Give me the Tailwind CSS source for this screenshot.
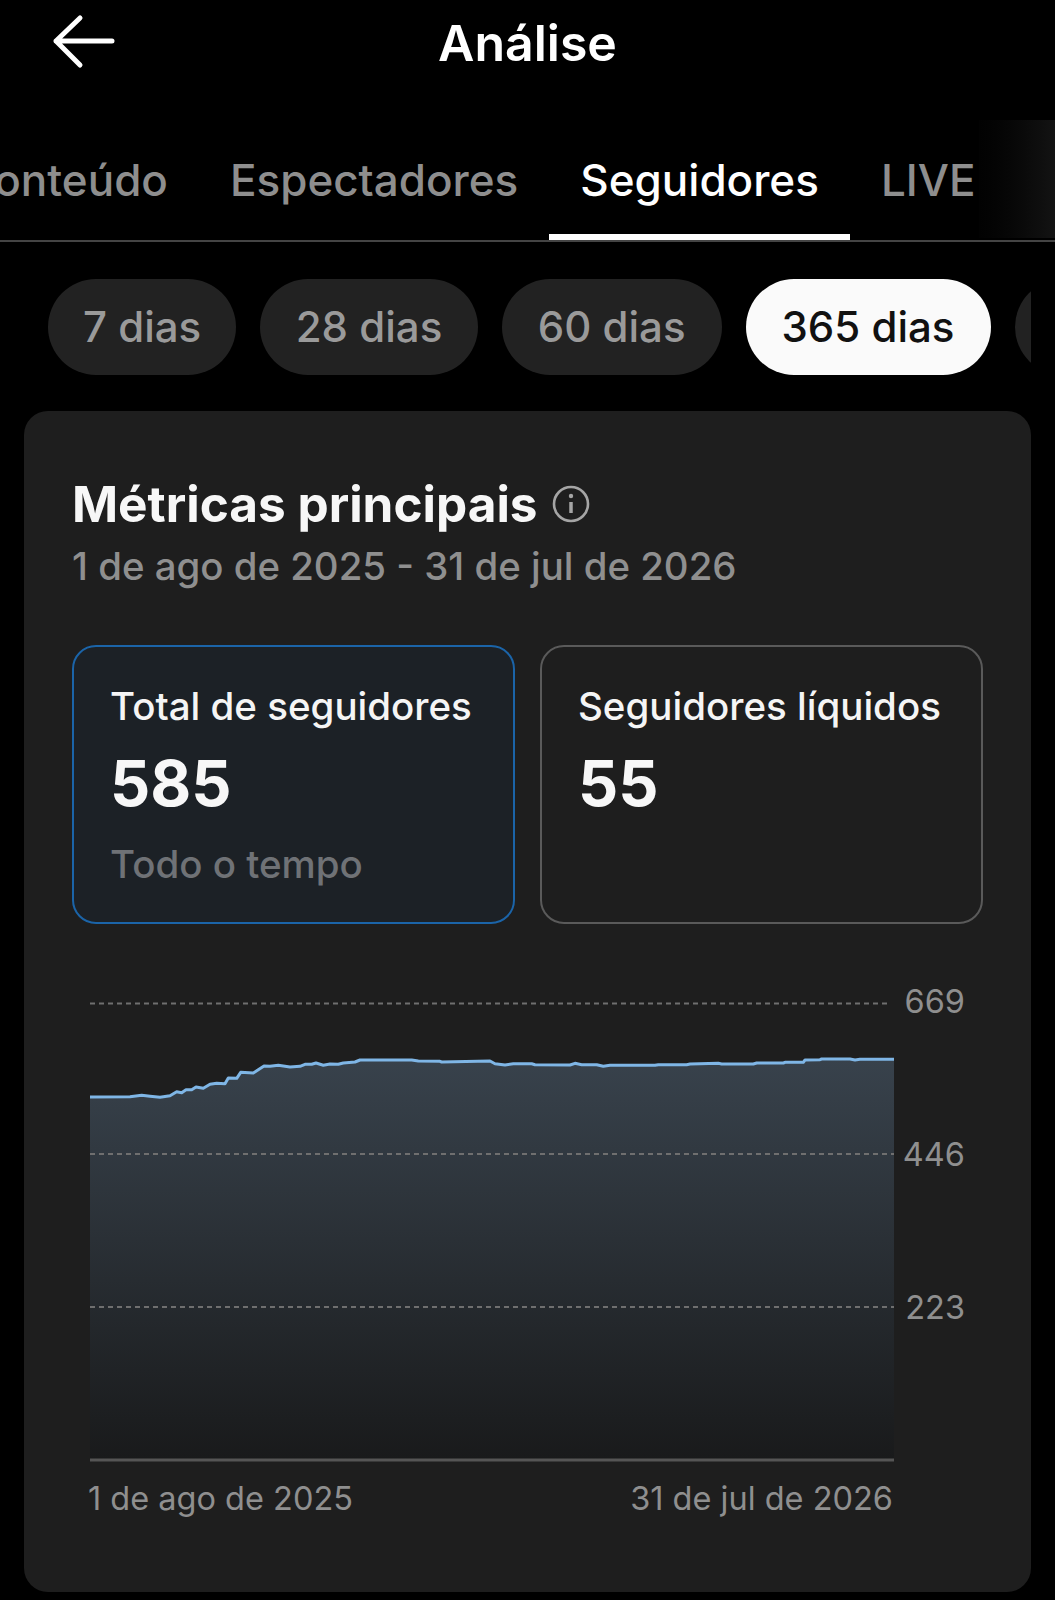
<!DOCTYPE html>
<html lang="pt">
<head>
  <meta charset="UTF-8" />
  <title>Análise</title>
  <script src="https://cdn.jsdelivr.net/npm/@tailwindcss/browser@4"></script>
</head>
<body class="bg-black text-white w-[1055px] h-[1600px] overflow-hidden font-['Inter',sans-serif]">

  <!-- Header -->
  <header class="relative h-[120px] flex justify-center pt-[12px]">
    <svg class="absolute left-[52px] top-[14px] w-[64px] h-[56px]" viewBox="0 0 64 56" fill="none" stroke="#fff" stroke-width="5" stroke-linecap="round" stroke-linejoin="round">
      <path d="M28 4 L4 27 L28 51 M4 27 H60" />
    </svg>
    <h1 class="text-[50px] leading-[62px] font-semibold">Análise</h1>
  </header>

  <!-- Tabs -->
  <nav class="relative h-[122px] border-b-2 border-[#444444] overflow-hidden">
    <div class="flex ml-[-69px] pt-[30px] text-[44px] leading-[60px] font-medium text-[#8e8e8e] whitespace-nowrap">
      <div class="shrink-0 px-[31px] h-[90px]">Conteúdo</div>
      <div class="shrink-0 px-[31px] h-[90px]">Espectadores</div>
      <div class="shrink-0 px-[31px] h-[90px] text-white border-b-[6px] border-white">Seguidores</div>
      <div class="shrink-0 px-[31px] h-[90px]">LIVE</div>
    </div>
    <div class="absolute right-0 top-0 h-[118px] w-[76px] bg-gradient-to-r from-[#020202] to-[#131313]"></div>
  </nav>

  <!-- Period pills -->
  <div class="flex gap-[24px] ml-[48px] mr-[24px] mt-[37px] overflow-hidden text-[42px] leading-[96px] font-medium whitespace-nowrap">
    <div class="shrink-0 h-[96px] px-[35px] rounded-[48px] bg-[#222222] text-[#9a9a9a]">7 dias</div>
    <div class="shrink-0 h-[96px] px-[35.5px] rounded-[48px] bg-[#222222] text-[#9a9a9a]">28 dias</div>
    <div class="shrink-0 h-[96px] px-[36px] rounded-[48px] bg-[#222222] text-[#9a9a9a]">60 dias</div>
    <div class="shrink-0 h-[96px] px-[36px] rounded-[48px] bg-[#fafafa] text-[#111111]">365 dias</div>
    <div class="shrink-0 h-[96px] w-[100px] rounded-[48px] bg-[#222222]"></div>
  </div>

  <!-- Main card -->
  <section class="mt-[36px] mx-[24px] h-[1181px] rounded-[24px] bg-[#1e1e1e] pt-[60px] px-[48px]">
    <div class="flex items-center gap-[14px]">
      <h2 class="text-[49.5px] leading-[66px] font-bold text-[#f7f7f7]">Métricas principais</h2>
      <svg class="w-[38px] h-[38px]" viewBox="0 0 38 38" fill="none" stroke="#a5a5a5" stroke-width="2.6">
        <circle cx="19" cy="19" r="17" />
        <path d="M19 17 V28" stroke-width="3.5" />
        <circle cx="19" cy="11" r="2.2" fill="#a5a5a5" stroke="none" />
      </svg>
    </div>
    <p class="text-[38.4px] leading-[58px] font-medium text-[#8f8f8f]">1 de ago de 2025 - 31 de jul de 2026</p>

    <div class="flex gap-[25px] mt-[50px]">
      <div class="w-[443px] h-[279px] rounded-[24px] border-2 border-[#1b64a8] bg-[#1c2126] pt-[32px] px-[36px]">
        <div class="text-[38.5px] leading-[54px] font-medium text-[#f5f5f5]">Total de seguidores</div>
        <div class="mt-[9px] text-[63px] leading-[82px] font-bold text-[#f7f7f7]">585</div>
        <div class="text-[38.5px] leading-[80px] font-medium text-[#6f7276]">Todo o tempo</div>
      </div>
      <div class="w-[443px] h-[279px] rounded-[24px] border-2 border-[#5a5a5a] pt-[32px] px-[36px]">
        <div class="text-[38.5px] leading-[54px] font-medium text-[#f5f5f5]">Seguidores líquidos</div>
        <div class="mt-[9px] text-[63px] leading-[82px] font-bold text-[#f7f7f7]">55</div>
      </div>
    </div>

    <!-- Chart -->
    <div class="relative mt-[47px] w-[911px] h-[560px]">
      <svg class="block" width="911" height="560" viewBox="72 971 911 560" fill="none">
        <defs>
          <linearGradient id="area" x1="0" y1="0" x2="0" y2="1">
            <stop offset="0" stop-color="#38424c" />
            <stop offset="1" stop-color="#191a1b" />
          </linearGradient>
        </defs>
        <path fill="url(#area)" d="M90 1097 L130 1096.7 141.7 1095.3 150 1096.3 160 1097.3 170 1095.7 176.7 1091.7 181.7 1092.7 186 1089.7 191.7 1089.7 196 1087 203.3 1088.3 210 1084.3 216.7 1083.3 225 1083.7 228.3 1078 236.7 1078.3 240.7 1072.3 253.3 1073 264 1066 270 1066.3 278.3 1065.3 290 1067 300 1066.3 305 1064.3 311.7 1064.3 316 1063 323.3 1065.3 330 1064 338.3 1064.3 343.3 1063 355 1062 360 1060 411.7 1060 418.3 1061 440 1061.3 441.7 1062 490 1061 495 1063.7 505 1065 513.3 1063.7 531.7 1063.7 535 1064.7 570 1065 575 1063.3 581.7 1064.7 596.7 1064.7 603.3 1066.3 610 1065.3 655 1065.3 658.3 1064.7 686.7 1064.7 690 1064 718.3 1063.3 721.7 1064 753.3 1064 756.7 1063 783.3 1063 785 1062.3 803.3 1062.3 805 1060 820 1059.7 821.7 1059 850 1059 855 1060 860 1059.3 894 1059.3 V1460 H90 Z" />
        <g stroke="#6f6f6f" stroke-width="2" stroke-dasharray="5 4">
          <path d="M90 1003.5 H890" />
          <path d="M90 1154 H894" />
          <path d="M90 1307 H894" />
        </g>
        <path stroke="#7fb6e6" stroke-width="3" stroke-linejoin="round" d="M90 1097 L130 1096.7 141.7 1095.3 150 1096.3 160 1097.3 170 1095.7 176.7 1091.7 181.7 1092.7 186 1089.7 191.7 1089.7 196 1087 203.3 1088.3 210 1084.3 216.7 1083.3 225 1083.7 228.3 1078 236.7 1078.3 240.7 1072.3 253.3 1073 264 1066 270 1066.3 278.3 1065.3 290 1067 300 1066.3 305 1064.3 311.7 1064.3 316 1063 323.3 1065.3 330 1064 338.3 1064.3 343.3 1063 355 1062 360 1060 411.7 1060 418.3 1061 440 1061.3 441.7 1062 490 1061 495 1063.7 505 1065 513.3 1063.7 531.7 1063.7 535 1064.7 570 1065 575 1063.3 581.7 1064.7 596.7 1064.7 603.3 1066.3 610 1065.3 655 1065.3 658.3 1064.7 686.7 1064.7 690 1064 718.3 1063.3 721.7 1064 753.3 1064 756.7 1063 783.3 1063 785 1062.3 803.3 1062.3 805 1060 820 1059.7 821.7 1059 850 1059 855 1060 860 1059.3 894 1059.3" />
        <path stroke="#555555" stroke-width="3" d="M90 1460 H894" />
        <g fill="#8f8f8f" font-size="32.5" text-anchor="end">
          <text x="965" y="1013">669</text>
          <text x="965" y="1166">446</text>
          <text x="965" y="1319">223</text>
          <text x="353" y="1510">1 de ago de 2025</text>
          <text x="893" y="1510">31 de jul de 2026</text>
        </g>
      </svg>
    </div>
  </section>

</body>
</html>
